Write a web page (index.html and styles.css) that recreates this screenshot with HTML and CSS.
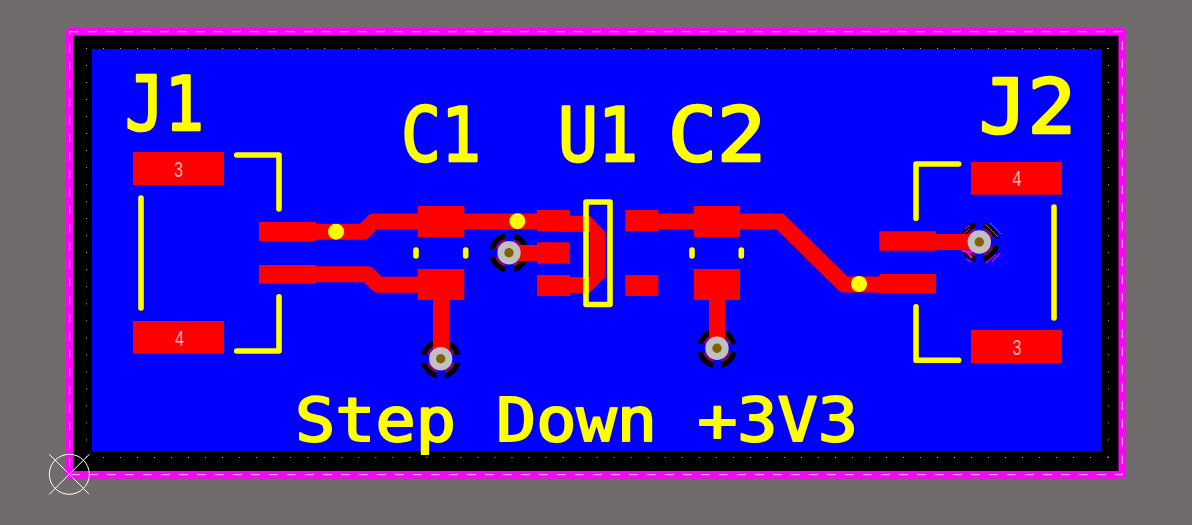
FILE: index.html
```html
<!DOCTYPE html>
<html lang="en">
<head>
<meta charset="utf-8">
<title>Step Down +3V3 PCB</title>
<link rel="stylesheet" href="styles.css">
</head>
<body>
<svg class="board" width="1192" height="525" viewBox="0 0 1192 525" xmlns="http://www.w3.org/2000/svg">
  <defs>
    <g id="thermal">
      <circle class="th-black" r="20"/>
      <circle class="th-purple" r="14.5"/>
      <path class="th-gap" d="M-22 0H22M0 -22V22"/>
    </g>
    <g id="hole">
      <circle class="hole-ring" r="11.7"/>
      <circle class="hole-drill" r="4.7"/>
    </g>
  </defs>

  <!-- outline and keepout -->
  <rect class="outline" x="69.7" y="31.7" width="1052.6" height="443"/>
  <rect class="copper" x="92" y="49" width="1010" height="402.4"/>
  <path class="grid" d="M86 48.5H1110M86 457.5H1110M86.5 48V460M1108.5 48V460"/>
  <rect class="outline-dash" x="69.7" y="31.7" width="1052.6" height="443"/>

  <!-- thermals -->
  <use href="#thermal" x="509" y="252.7"/>
  <use href="#thermal" x="440.7" y="358.7"/>
  <use href="#thermal" x="717" y="348.3"/>
  <use href="#thermal" x="979.3" y="242"/>
  <path class="hatch" d="M965 229l5 -4M961 236l8 -7M985 224l13 13M990 223l11 11M992 261l8 -8M986 263l10 -9M966 259l5 3"/>
  <path class="hatch-mark" d="M962 251l10 1M966 251l6 7"/>

  <!-- traces -->
  <path class="trace" d="M316 231.7H363L373.5 221.5H540"/>
  <path class="trace" d="M316 274.3H367.5L378 284.7H420"/>
  <path class="trace" d="M441 290V358"/>
  <path class="trace" d="M717 290V348"/>
  <path class="trace" d="M509 253H545"/>
  <path class="trace" d="M560 285H590"/>
  <path class="trace" d="M560 223.8H590"/>
  <path class="trace" d="M650 221.5H780L844 284.5H885"/>
  <path class="trace" d="M930 242H979"/>
  <polygon class="pad" points="590,216 605,231.7 605,277.3 590,292.3"/>

  <!-- pads -->
  <rect class="pad" x="133" y="152" width="91" height="33"/>
  <rect class="pad" x="133" y="321" width="91" height="32.7"/>
  <rect class="pad" x="971" y="162" width="91" height="32.7"/>
  <rect class="pad" x="971" y="330" width="91" height="33.3"/>
  <rect class="pad" x="259" y="222" width="57" height="19.3"/>
  <rect class="pad" x="259" y="265" width="57" height="18.7"/>
  <rect class="pad" x="879.3" y="231.3" width="56.7" height="19.4"/>
  <rect class="pad" x="879.3" y="274" width="56.7" height="19.3"/>
  <rect class="pad" x="417.7" y="206" width="46.6" height="31"/>
  <rect class="pad" x="417.7" y="269" width="46.6" height="31"/>
  <rect class="pad" x="693.7" y="206" width="46.3" height="31"/>
  <rect class="pad" x="693.7" y="269" width="46.3" height="31"/>
  <rect class="pad" x="537" y="210" width="33" height="21.3"/>
  <rect class="pad" x="537" y="242.3" width="33" height="21.4"/>
  <rect class="pad" x="537" y="275" width="33" height="21"/>
  <rect class="pad" x="625.3" y="210" width="33" height="21.3"/>
  <rect class="pad" x="625.3" y="275" width="33" height="21"/>

  <text class="pad-num" x="178.5" y="177" textLength="9" lengthAdjust="spacingAndGlyphs">3</text>
  <text class="pad-num" x="179.5" y="346" textLength="9" lengthAdjust="spacingAndGlyphs">4</text>
  <text class="pad-num" x="1017" y="186" textLength="9" lengthAdjust="spacingAndGlyphs">4</text>
  <text class="pad-num" x="1017" y="355" textLength="9" lengthAdjust="spacingAndGlyphs">3</text>

  <!-- drilled holes -->
  <use href="#hole" x="509" y="252.7"/>
  <use href="#hole" x="440.7" y="358.7"/>
  <use href="#hole" x="717" y="348.3"/>
  <use href="#hole" x="979.3" y="242"/>

  <!-- vias -->
  <circle class="via" cx="336" cy="231.7" r="8"/>
  <circle class="via" cx="517.3" cy="221.2" r="8"/>
  <circle class="via" cx="859" cy="284" r="8"/>
  <path class="via-dot" d="M335.5 231.5h1v1h-1zM517 221h1v1h-1zM858.5 283.5h1v1h-1z"/>

  <!-- silkscreen -->
  <path class="silk" d="M236.7 155H279V209M279 296.7V351H236.7M141 198V308"/>
  <path class="silk" d="M916 218.3V164H958.7M916 306.7V360.3H958.7M1054 207V318"/>
  <path class="silk" d="M586 202H610V304.5H586Z"/>
  <path class="silk" d="M416 250V256M465.7 250V256M692 250V256M741.3 250V256"/>

  <text class="designator" x="125" y="130" textLength="79" lengthAdjust="spacingAndGlyphs">J1</text>
  <text class="designator" x="401" y="161" textLength="80" lengthAdjust="spacingAndGlyphs">C1</text>
  <text class="designator" x="558" y="161" textLength="80" lengthAdjust="spacingAndGlyphs">U1</text>
  <text class="designator" x="668" y="161" textLength="98" lengthAdjust="spacingAndGlyphs">C2</text>
  <text class="designator" x="979" y="133" textLength="97" lengthAdjust="spacingAndGlyphs">J2</text>
  <text class="title" x="295" y="441" textLength="563" lengthAdjust="spacingAndGlyphs">Step Down +3V3</text>

  <!-- origin marker -->
  <g class="origin">
    <circle cx="69.3" cy="474.3" r="20"/>
    <path d="M49.3 454.3L89.3 494.3M89.3 454.3L49.3 494.3"/>
  </g>
</svg>
</body>
</html>
```
FILE: styles.css
```css
html, body {
  margin: 0;
  padding: 0;
  background: #716c6c;
  overflow: hidden;
}
.board { display: block; }
.outline {
  fill: #000;
  stroke: #ff00ff;
  stroke-width: 7.6;
  stroke-linejoin: round;
}
.outline-dash {
  fill: none;
  stroke: #e4c4e4;
  stroke-width: 1;
  stroke-dasharray: 9 9;
}
.copper { fill: #0000ff; }
.grid {
  fill: none;
  stroke: #a8a8a8;
  stroke-width: 1;
  stroke-dasharray: 1 16.02;
}
.th-black { fill: #000; }
.th-purple { fill: #800080; }
.th-gap { fill: none; stroke: #0000ff; stroke-width: 8; }
.hatch { fill: none; stroke: #ff00ff; stroke-width: 1; }
.hatch-mark { fill: none; stroke: #ff00ff; stroke-width: 2; }
.hole-ring { fill: #c0c0c0; }
.hole-drill { fill: #806000; }
.trace {
  fill: none;
  stroke: #ff0000;
  stroke-width: 16;
  stroke-linejoin: round;
}
.pad { fill: #ff0000; }
.pad-num {
  fill: #ffb4b4;
  font-family: "Liberation Sans", sans-serif;
  font-size: 22px;
  text-anchor: middle;
}
.via { fill: #ffff00; }
.via-dot { fill: #ff8000; }
.silk {
  fill: none;
  stroke: #ffff00;
  stroke-width: 5.6;
  stroke-linecap: round;
  stroke-linejoin: round;
}
.designator, .title {
  fill: #ffff00;
  stroke: #ffff00;
  stroke-linejoin: round;
  font-family: "DejaVu Sans Mono", monospace;
}
.designator { font-size: 74px; stroke-width: 2.5px; }
.title { font-size: 60px; stroke-width: 2px; }
.origin circle, .origin path {
  fill: none;
  stroke: #fff;
  stroke-width: 1;
}
```
